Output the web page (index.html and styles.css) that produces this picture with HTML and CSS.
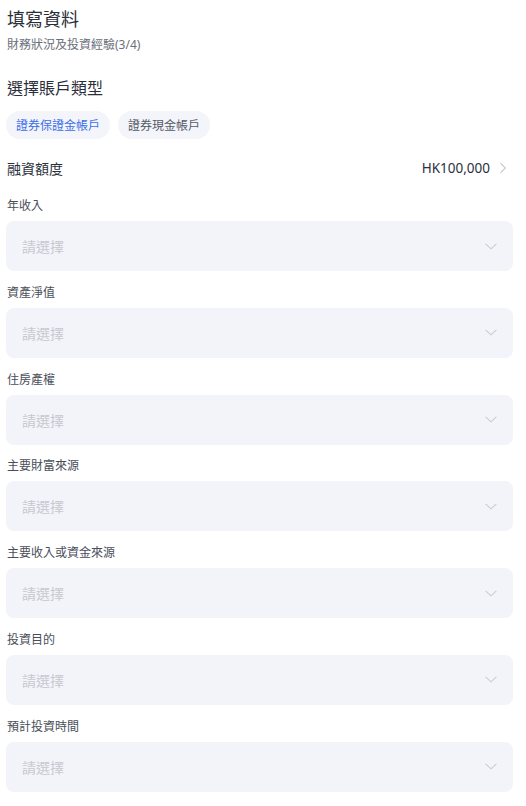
FILE: index.html
```html
<!DOCTYPE html>
<html lang="zh-Hant">
<head>
<meta charset="utf-8">
<title>填寫資料</title>
<link rel="stylesheet" href="styles.css">
</head>
<body>
<div class="page">
  <h1 class="title">填寫資料</h1>
  <p class="subtitle">財務狀況及投資經驗(3/4)</p>

  <h2 class="section-title">選擇賬戶類型</h2>
  <div class="chips">
    <span class="chip chip-active">證券保證金帳戶</span>
    <span class="chip">證券現金帳戶</span>
  </div>

  <div class="amount-row">
    <span class="amount-label">融資額度</span>
    <span class="amount-value">HK100,000
      <svg class="chev-right" width="8" height="12" viewBox="0 0 8 12"><path d="M1.5 1.2 L6.3 6 L1.5 10.8" fill="none" stroke="#c9cbd1" stroke-width="1.2"/></svg>
    </span>
  </div>

  <div class="fields">
    <div class="field">
      <div class="field-label">年收入</div>
      <div class="select"><span class="placeholder">請選擇</span><svg class="chev-down" width="12" height="7" viewBox="0 0 12 7"><path d="M0.6 0.8 L6 5.8 L11.4 0.8" fill="none" stroke="#c9cbd1" stroke-width="1.1"/></svg></div>
    </div>
    <div class="field">
      <div class="field-label">資產淨值</div>
      <div class="select"><span class="placeholder">請選擇</span><svg class="chev-down" width="12" height="7" viewBox="0 0 12 7"><path d="M0.6 0.8 L6 5.8 L11.4 0.8" fill="none" stroke="#c9cbd1" stroke-width="1.1"/></svg></div>
    </div>
    <div class="field">
      <div class="field-label">住房產權</div>
      <div class="select"><span class="placeholder">請選擇</span><svg class="chev-down" width="12" height="7" viewBox="0 0 12 7"><path d="M0.6 0.8 L6 5.8 L11.4 0.8" fill="none" stroke="#c9cbd1" stroke-width="1.1"/></svg></div>
    </div>
    <div class="field">
      <div class="field-label">主要財富來源</div>
      <div class="select"><span class="placeholder">請選擇</span><svg class="chev-down" width="12" height="7" viewBox="0 0 12 7"><path d="M0.6 0.8 L6 5.8 L11.4 0.8" fill="none" stroke="#c9cbd1" stroke-width="1.1"/></svg></div>
    </div>
    <div class="field">
      <div class="field-label">主要收入或資金來源</div>
      <div class="select"><span class="placeholder">請選擇</span><svg class="chev-down" width="12" height="7" viewBox="0 0 12 7"><path d="M0.6 0.8 L6 5.8 L11.4 0.8" fill="none" stroke="#c9cbd1" stroke-width="1.1"/></svg></div>
    </div>
    <div class="field">
      <div class="field-label">投資目的</div>
      <div class="select"><span class="placeholder">請選擇</span><svg class="chev-down" width="12" height="7" viewBox="0 0 12 7"><path d="M0.6 0.8 L6 5.8 L11.4 0.8" fill="none" stroke="#c9cbd1" stroke-width="1.1"/></svg></div>
    </div>
    <div class="field">
      <div class="field-label">預計投資時間</div>
      <div class="select"><span class="placeholder">請選擇</span><svg class="chev-down" width="12" height="7" viewBox="0 0 12 7"><path d="M0.6 0.8 L6 5.8 L11.4 0.8" fill="none" stroke="#c9cbd1" stroke-width="1.1"/></svg></div>
    </div>
  </div>
</div>
</body>
</html>
```

FILE: styles.css
```css
* { box-sizing: border-box; }
html, body { margin: 0; padding: 0; background: #ffffff; }
body {
  font-family: "Noto Sans", "Noto Sans CJK TC", sans-serif;
  color: #2b2f3a;
}
.page {
  padding: 0 13px 0 6px;
}
.title {
  margin: 6px 0 0 1px;
  font-size: 18px;
  line-height: 26px;
  font-weight: 400;
  color: #2b2f3a;
}
.subtitle {
  margin: 4px 0 0 1px;
  font-size: 12px;
  line-height: 17px;
  color: #6b6f7a;
}
.section-title {
  margin: 24px 0 0 1px;
  font-size: 16px;
  line-height: 22px;
  font-weight: 400;
  color: #2b2f3a;
}
.chips {
  display: flex;
  gap: 8px;
  margin-top: 12px;
}
.chip {
  display: inline-flex;
  align-items: center;
  height: 28px;
  padding: 0 10px;
  border-radius: 14px;
  background: #f3f5fa;
  font-size: 12px;
  color: #555a66;
}
.chip-active {
  color: #3d6fe8;
}
.amount-row {
  display: flex;
  justify-content: space-between;
  align-items: center;
  margin-top: 19px;
  height: 20px;
  padding: 0 6px 0 1px;
}
.amount-label {
  font-size: 14px;
  color: #2b2f3a;
}
.amount-value {
  display: inline-flex;
  align-items: center;
  gap: 9px;
  font-size: 13.5px;
  font-weight: 400;
  color: #2b3040;
}
.chev-right { display: block; }
.fields {
  display: flex;
  flex-direction: column;
  gap: 12.8px;
  margin-top: 19px;
}
.field-label {
  font-size: 12px;
  line-height: 17px;
  color: #4a4e59;
  padding-left: 1px;
  margin-bottom: 7px;
}
.select {
  display: flex;
  align-items: center;
  justify-content: space-between;
  height: 50px;
  padding: 0 16px;
  border-radius: 8px;
  background: #f3f4f9;
}
.placeholder {
  font-size: 14px;
  color: #c6c9d1;
}
.chev-down { display: block; }
```
